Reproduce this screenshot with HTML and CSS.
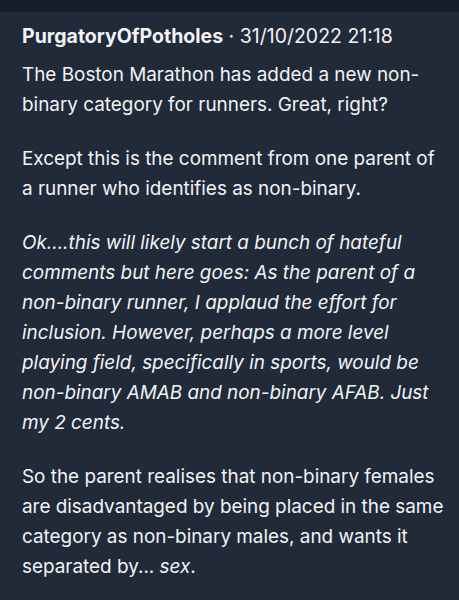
FILE: index.html
```html
<!DOCTYPE html>
<html>
<head>
<meta charset="utf-8">
<link rel="stylesheet" href="styles.css">
</head>
<body>
<div class="topbar"></div>
<div class="post">
  <div class="header"><span class="user">PurgatoryOfPotholes</span> · 31/10/2022 21:18</div>
  <p>The Boston Marathon has added a new non-binary category for runners. Great, right?</p>
  <p>Except this is the comment from one parent of a runner who identifies as non-binary.</p>
  <p class="quote">Ok....this will likely start a bunch of hateful comments but here goes: As the parent of a non-binary runner, I applaud the effort for inclusion. However, perhaps a more level playing field, specifically in sports, would be non-binary AMAB and non-binary AFAB. Just my 2 cents.</p>
  <p>So the parent realises that non-binary females are disadvantaged by being placed in the same category as non-binary males, and wants it separated by... <em>sex</em>.</p>
</div>
</body>
</html>
```
FILE: styles.css
```css
html, body {
  margin: 0;
  padding: 0;
  background: #212a39;
}
body {
  font-family: Inter, "Noto Sans", sans-serif;
  color: #f2f3f5;
  width: 459px;
  height: 600px;
  overflow: hidden;
}
.topbar {
  height: 12px;
  background: #161d29;
}
.post {
  padding: 9px 13px 0 22px;
}
.header {
  font-size: 19.5px;
  line-height: 30px;
  margin-bottom: 9px;
}
.user {
  font-weight: 700;
}
p {
  margin: 0 0 24px 0;
  font-size: 18.9px;
  line-height: 30px;
}
.quote, em {
  font-style: italic;
}
```
